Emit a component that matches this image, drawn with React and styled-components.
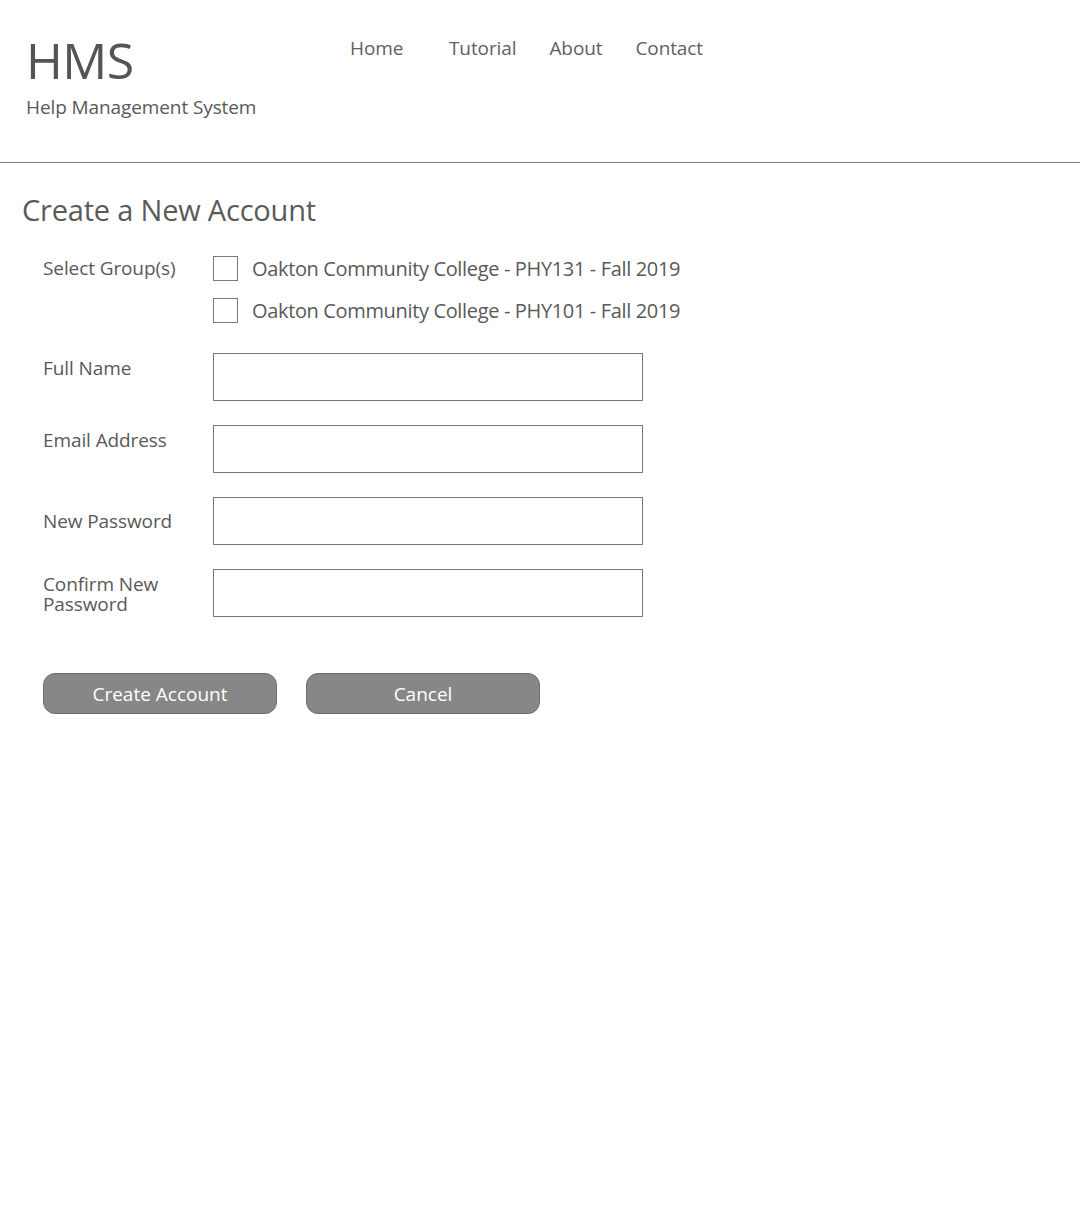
import React from 'react';
import styled, { createGlobalStyle } from 'styled-components';

const GlobalStyle = createGlobalStyle`
  body {
    margin: 0;
    background: #fff;
    font-family: "Open Sans", "Noto Sans", sans-serif;
    color: #595959;
  }
`;

const Header = styled.header`
  display: flex;
  align-items: flex-start;
  height: 163px;
  border-bottom: 1px solid #7a7a7a;
  box-sizing: border-box;
`;

const Brand = styled.div`
  padding: 29px 0 0 26px;
  width: 350px;
  box-sizing: border-box;
`;

const Logo = styled.div`
  font-size: 50px;
  line-height: 62px;
  color: #555;
  letter-spacing: -0.5px;
`;

const Tagline = styled.div`
  font-size: 19px;
  line-height: 26px;
  margin-top: 3px;
  letter-spacing: -0.1px;
`;

const Nav = styled.nav`
  display: flex;
  gap: 33px;
  padding-top: 34px;
`;

const NavLink = styled.a`
  font-size: 19px;
  line-height: 28px;
  color: #5f5f5f;
  text-decoration: none;
  letter-spacing: -0.1px;
  min-width: ${p => (p.$wide ? '66px' : 'auto')};
`;

const Main = styled.main`
  padding: 0 0 0 22px;
`;

const Title = styled.h1`
  margin: 27px 0 0;
  font-size: 29px;
  font-weight: 400;
  line-height: 40px;
  letter-spacing: -0.2px;
  color: #5a5a5a;
`;

const Form = styled.form`
  display: grid;
  grid-template-columns: 170px 430px;
  row-gap: 24px;
  margin: 26px 0 0 21px;
`;

const Label = styled.label`
  font-size: 19px;
  line-height: 20px;
  letter-spacing: -0.1px;
  padding-top: ${p => p.$top || 0}px;
  align-self: ${p => (p.$center ? 'center' : 'start')};
`;

const Groups = styled.div`
  display: flex;
  flex-direction: column;
  gap: 17px;
  margin-bottom: 6px;
`;

const GroupRow = styled.label`
  display: flex;
  align-items: center;
  gap: 14px;
  font-size: 20px;
  line-height: 25px;
  white-space: nowrap;
  letter-spacing: -0.35px;
`;

const Box = styled.span`
  width: 23px;
  height: 23px;
  border: 1px solid #7a7a7a;
  flex-shrink: 0;
`;

const Input = styled.input`
  width: 430px;
  height: 48px;
  box-sizing: border-box;
  border: 1px solid #777;
  border-radius: 0;
  outline: none;
  font: inherit;
  font-size: 19px;
  padding: 0 10px;
`;

const Buttons = styled.div`
  display: flex;
  gap: 29px;
  margin: 56px 0 0 21px;
`;

const Button = styled.button`
  width: 234px;
  height: 41px;
  border: 1px solid #6e6e6e;
  border-radius: 12px;
  background: #878787;
  color: #fff;
  font-family: inherit;
  font-size: 19px;
  letter-spacing: 0;
  cursor: pointer;
  padding: 0;
`;

const groups = [
  'Oakton Community College - PHY131 - Fall 2019',
  'Oakton Community College - PHY101 - Fall 2019',
];

const App = () => {
  return (
    <>
      <GlobalStyle />
      <Header>
        <Brand>
          <Logo>HMS</Logo>
          <Tagline>Help Management System</Tagline>
        </Brand>
        <Nav>
          <NavLink href="#" $wide>Home</NavLink>
          <NavLink href="#">Tutorial</NavLink>
          <NavLink href="#">About</NavLink>
          <NavLink href="#">Contact</NavLink>
        </Nav>
      </Header>
      <Main>
        <Title>Create a New Account</Title>
        <Form>
          <Label $top={2}>Select Group(s)</Label>
          <Groups>
            {groups.map((g, i) => (
              <GroupRow key={i}>
                <Box />
                {g}
              </GroupRow>
            ))}
          </Groups>

          <Label $top={5}>Full Name</Label>
          <Input type="text" />

          <Label $top={5}>Email Address</Label>
          <Input type="email" />

          <Label $center>New Password</Label>
          <Input type="password" />

          <Label $top={5}>Confirm New<br />Password</Label>
          <Input type="password" />
        </Form>
        <Buttons>
          <Button type="button">Create Account</Button>
          <Button type="button">Cancel</Button>
        </Buttons>
      </Main>
    </>
  );
};

export default App;
